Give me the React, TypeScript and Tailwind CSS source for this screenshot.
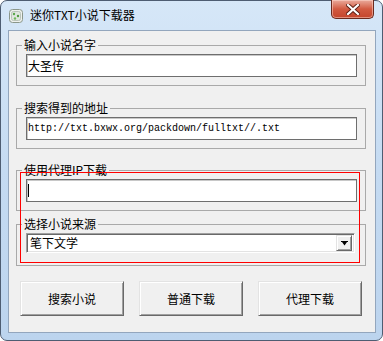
import React from "react";

const CJK = "font-['Noto_Sans_CJK_SC','Noto_Sans',sans-serif]";

function Group({ label, tall, children }: { label: string; tall?: boolean; children: React.ReactNode }) {
  return (
    <fieldset className={`ml-[7px] w-[350px] border border-[#a9a9a9] px-0 ${tall ? "pb-[12px]" : "pb-[8px]"}`}>
      <legend className="ml-[5px] px-[2px] text-[12px] leading-[14px] text-black">{label}</legend>
      <div className="pl-[9px] pt-[2px]">{children}</div>
    </fieldset>
  );
}

function TextBox({ children, mono }: { children?: React.ReactNode; mono?: boolean }) {
  return (
    <div
      className={`w-[331px] h-[23px] bg-white border border-[#6e6e6e] shadow-[inset_1px_1px_0_#c8c8c8] flex items-center pl-[1px] text-black ${
        mono ? "font-['Liberation_Mono',monospace] text-[10px]" : "text-[12px]"
      }`}
    >
      {children}
    </div>
  );
}

function Btn({ label }: { label: string }) {
  return (
    <button className="w-[104px] h-[35px] bg-[#f0f0f0] border border-t-[#e3e3e3] border-l-[#e3e3e3] border-r-[#696969] border-b-[#696969] shadow-[inset_1px_1px_0_#ffffff,inset_-1px_-1px_0_#a0a0a0] text-[12px] text-black flex items-center justify-center">
      {label}
    </button>
  );
}

export default function App() {
  return (
    <div className={`w-[383px] h-[341px] overflow-hidden bg-white ${CJK}`}>
      <div className="w-full h-full rounded-[7px] border border-[#4e5d72] bg-gradient-to-b from-[#d6e7f8] via-[#c5dbf2] to-[#bcd4ee] flex flex-col">
        {/* title bar */}
        <div className="h-[29px] flex items-start shrink-0">
          <div className="mt-[8px] ml-[8px] w-[14px] h-[14px]">
            <svg width="14" height="14" viewBox="0 0 14 14">
              <rect x="0.5" y="0.5" width="13" height="13" rx="3" fill="#eef1ee" stroke="#8a968a" />
              <rect x="2.5" y="2.5" width="9" height="9" rx="2" fill="#dfe6df" stroke="#b9c3b9" />
              <circle cx="5" cy="5" r="1.2" fill="#5aa64a" />
              <circle cx="9" cy="7" r="1.2" fill="#4f9a3f" />
              <circle cx="6" cy="9.5" r="1.2" fill="#6fba5c" />
            </svg>
          </div>
          <span className="ml-[7px] mt-[6px] text-[12px] leading-[16px] text-black">迷你TXT小说下载器</span>
          <div className="ml-auto mr-[8px] -mt-px w-[43px] h-[19px] rounded-b-[5px] border border-[#6b2a1e] border-t-0 bg-gradient-to-b from-[#e9aa9c] via-[#d25a41] to-[#c4452c] shadow-[inset_0_0_0_1px_rgba(255,220,210,0.5)] flex items-center justify-center">
            <svg width="14" height="11" viewBox="0 0 14 11">
              <path d="M2 1 L12 10 M12 1 L2 10" stroke="#5b1d12" strokeWidth="4" strokeLinecap="square" />
              <path d="M2 1 L12 10 M12 1 L2 10" stroke="#ffffff" strokeWidth="2.2" strokeLinecap="square" />
            </svg>
          </div>
        </div>

        {/* client area */}
        <div className="relative ml-[7px] mr-[6px] mb-[7px] flex-1 border border-[#93a6bd] bg-[#f0f0f0] flex flex-col">
          <div className="mt-[7px]">
            <Group label="输入小说名字">
              <TextBox>大圣传</TextBox>
            </Group>
          </div>
          <div className="mt-[15px]">
            <Group label="搜索得到的地址">
              <TextBox mono>http://txt.bxwx.org/packdown/fulltxt//.txt</TextBox>
            </Group>
          </div>
          <div className="mt-[14px]">
            <Group label="使用代理IP下载">
              <TextBox>
                <span className="block w-px h-[13px] bg-black" />
              </TextBox>
            </Group>
          </div>
          <div className="mt-[6px]">
            <Group label="选择小说来源" tall>
              <div className="w-[329px] h-[20px] bg-white border border-t-[#a0a0a0] border-l-[#a0a0a0] border-r-white border-b-white shadow-[inset_1px_1px_0_#696969,inset_-1px_-1px_0_#e3e3e3] flex items-center pl-[3px] pr-[2px] text-[12px] text-black">
                <span className="flex-1">笔下文学</span>
                <div className="w-[16px] h-[16px] bg-[#f0f0f0] border border-t-[#e3e3e3] border-l-[#e3e3e3] border-r-[#696969] border-b-[#696969] shadow-[inset_1px_1px_0_#ffffff,inset_-1px_-1px_0_#a0a0a0] flex items-center justify-center">
                  <svg width="7" height="5" viewBox="0 0 7 5">
                    <path d="M0 0 H7 V1 H0 Z M1 1 H6 L3.5 4.5 Z" fill="#000" />
                  </svg>
                </div>
              </div>
            </Group>
          </div>

          <div className="mt-[15px] ml-[11px] flex gap-[15px]">
            <Btn label="搜索小说" />
            <Btn label="普通下载" />
            <Btn label="代理下载" />
          </div>

          {/* red annotation box */}
          <div className="absolute left-[11px] top-[141px] w-[340px] h-[91px] border border-[#ff0000] pointer-events-none" />
        </div>
      </div>
    </div>
  );
}
